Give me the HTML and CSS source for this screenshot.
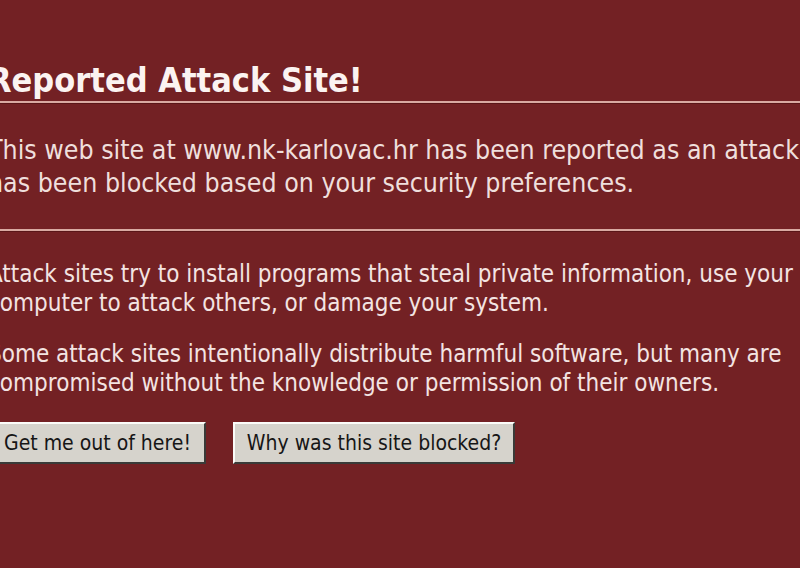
FILE: index.html
```html
<!DOCTYPE html>
<html lang="en">
<head>
<meta charset="utf-8">
<title>Reported Attack Site!</title>
<link rel="stylesheet" href="styles.css">
</head>
<body>
<div class="page">
  <h1 class="title">Reported Attack Site!</h1>
  <div class="intro">
    <p class="short-desc">This web site at www.nk-karlovac.hr has been reported as an attack site and<br>has been blocked based on your security preferences.</p>
  </div>
  <div class="long-desc">
    <p>Attack sites try to install programs that steal private information, use your<br>computer to attack others, or damage your system.</p>
    <p>Some attack sites intentionally distribute harmful software, but many are<br>compromised without the knowledge or permission of their owners.</p>
  </div>
  <div class="buttons">
    <button class="btn btn-out" type="button">Get me out of here!</button>
    <button class="btn btn-why" type="button">Why was this site blocked?</button>
  </div>
</div>
</body>
</html>
```

FILE: styles.css
```css
html, body {
  margin: 0;
  padding: 0;
  background: #732124;
  overflow: hidden;
}

.page {
  margin-left: -12px;
  padding-top: 60px;
  color: #f3e4e2;
  font-family: "DejaVu Sans Condensed", "DejaVu Sans", sans-serif;
}

.title {
  margin: 0;
  padding-bottom: 1px;
  font-size: 34px;
  line-height: 40px;
  font-weight: bold;
  color: #fbf3f1;
  border-bottom: 2px solid #d9aaa2;
  box-shadow: 0 1px 0 #5a1618;
  white-space: nowrap;
}

.intro {
  margin-top: 30px;
  padding-bottom: 30px;
  border-bottom: 2px solid #d9aaa2;
  box-shadow: 0 1px 0 #5a1618;
}

.short-desc {
  margin: 0;
  font-size: 26.5px;
  line-height: 33px;
  white-space: nowrap;
  color: #efdfdc;
}

.long-desc {
  margin-top: 29px;
}

.long-desc p {
  margin: 0 0 22px;
  font-size: 24px;
  line-height: 29px;
  white-space: nowrap;
}

.buttons {
  margin-top: 24px;
  display: flex;
  gap: 27px;
  margin-left: 1px;
}

.btn {
  height: 42px;
  padding: 0 10px;
  background: #d6d3cc;
  color: #161616;
  font-family: "DejaVu Sans Condensed", "DejaVu Sans", sans-serif;
  font-size: 21px;
  border: 2px solid;
  border-color: #fbfbf8 #3a3a38 #3a3a38 #fbfbf8;
  border-radius: 0;
}

.btn-out {
  width: 217px;
}

.btn-why {
  width: 282px;
}
```
